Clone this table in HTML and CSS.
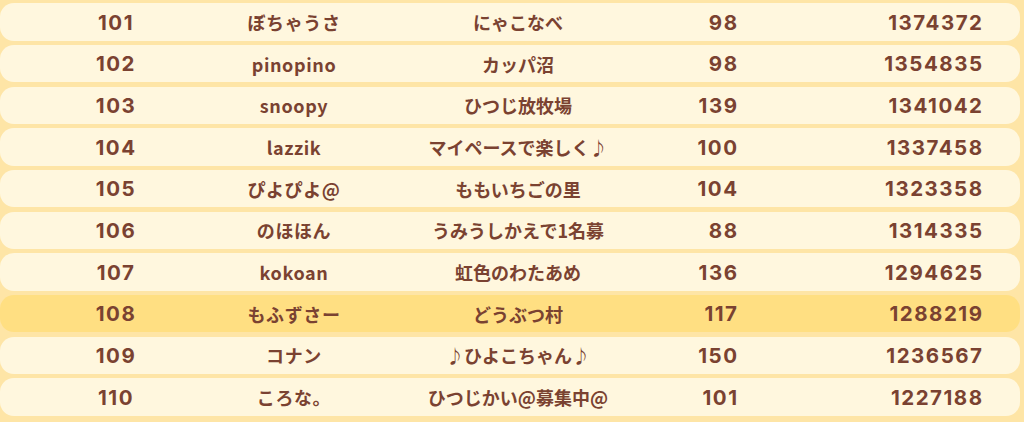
FILE: index.html
```html
<!DOCTYPE html>
<html lang="ja">
<head>
<meta charset="utf-8">
<link rel="stylesheet" href="styles.css">
</head>
<body>
<div class="ranking">
  <div class="row"><span class="rank">101</span><span class="name">ぼちゃうさ</span><span class="team">にゃこなべ</span><span class="count">98</span><span class="score">1374372</span></div>
  <div class="row"><span class="rank">102</span><span class="name">pinopino</span><span class="team">カッパ沼</span><span class="count">98</span><span class="score">1354835</span></div>
  <div class="row"><span class="rank">103</span><span class="name">snoopy</span><span class="team">ひつじ放牧場</span><span class="count">139</span><span class="score">1341042</span></div>
  <div class="row"><span class="rank">104</span><span class="name">lazzik</span><span class="team">マイペースで楽しく♪</span><span class="count">100</span><span class="score">1337458</span></div>
  <div class="row"><span class="rank">105</span><span class="name">ぴよぴよ@</span><span class="team">ももいちごの里</span><span class="count">104</span><span class="score">1323358</span></div>
  <div class="row"><span class="rank">106</span><span class="name">のほほん</span><span class="team">うみうしかえで1名募</span><span class="count">88</span><span class="score">1314335</span></div>
  <div class="row"><span class="rank">107</span><span class="name">kokoan</span><span class="team">虹色のわたあめ</span><span class="count">136</span><span class="score">1294625</span></div>
  <div class="row row-me"><span class="rank">108</span><span class="name">もふずさー</span><span class="team">どうぶつ村</span><span class="count">117</span><span class="score">1288219</span></div>
  <div class="row"><span class="rank">109</span><span class="name">コナン</span><span class="team">♪ひよこちゃん♪</span><span class="count">150</span><span class="score">1236567</span></div>
  <div class="row"><span class="rank">110</span><span class="name">ころな。</span><span class="team">ひつじかい@募集中@</span><span class="count">101</span><span class="score">1227188</span></div>
</div>
</body>
</html>
```
FILE: styles.css
```css
html, body {
  margin: 0;
  padding: 0;
  background: #fee5a6;
}
body {
  width: 1024px;
  height: 422px;
  overflow: hidden;
  font-family: "Noto Sans CJK JP", "Noto Sans", sans-serif;
  font-weight: 700;
  color: #7a4231;
}
.ranking {
  display: flex;
  flex-direction: column;
  gap: 4.33px;
  padding: 3.3px 4px 0 0;
}
.row {
  height: 37.33px;
  background: #fff7de;
  border-radius: 14px;
  display: grid;
  grid-template-columns: 232px 124px 324px 60px 245px 1fr;
  align-items: center;
  font-size: 18px;
  line-height: 1;
}
.row-me {
  background: #ffdf82;
}
.rank, .name, .team {
  text-align: center;
}
.rank, .count, .score {
  font-family: Inter, "Noto Sans", sans-serif;
  font-size: 20.5px;
  letter-spacing: 1.5px;
  padding-top: 2px;
}
.name {
  letter-spacing: 0.6px;
}
.count, .score {
  text-align: right;
}
.count {
  margin-right: 1.5px;
}
.score {
  margin-right: 1.5px;
}
```
